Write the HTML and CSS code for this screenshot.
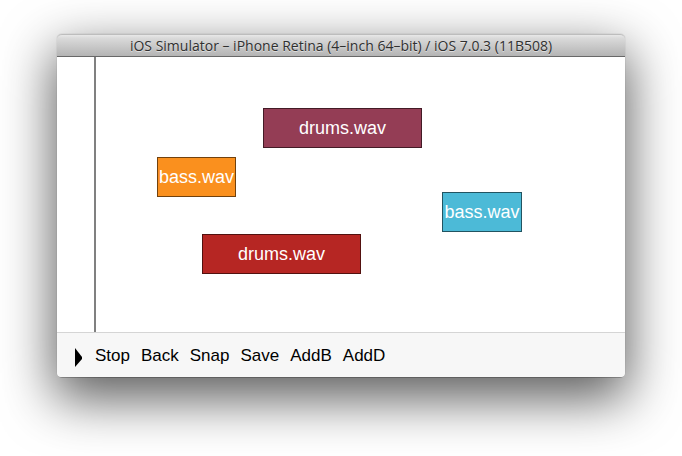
FILE: index.html
```html
<!DOCTYPE html>
<html lang="en">
<head>
<meta charset="utf-8">
<meta name="viewport" content="width=device-width, initial-scale=1">
<title>iOS Simulator</title>
<link rel="stylesheet" href="styles.css">
</head>
<body>
<main class="window">
  <header class="titlebar"><h1 class="title">iOS Simulator – iPhone Retina (4–inch 64–bit) / iOS 7.0.3 (11B508)</h1></header>
  <section class="stage">
    <div class="playhead"></div>
    <div class="clip drums plum">drums.wav</div>
    <div class="clip bass orange">bass.wav</div>
    <div class="clip bass cyan">bass.wav</div>
    <div class="clip drums red">drums.wav</div>
  </section>
  <nav class="toolbar">
    <button class="tool play" type="button" aria-label="Play"><svg class="play-icon" viewBox="0 0 10 20" aria-hidden="true"><path d="M1 0L8 9V11L1 19Z"/></svg></button>
    <button class="tool" type="button">Stop</button>
    <button class="tool" type="button">Back</button>
    <button class="tool" type="button">Snap</button>
    <button class="tool" type="button">Save</button>
    <button class="tool" type="button">AddB</button>
    <button class="tool" type="button">AddD</button>
  </nav>
</main>
</body>
</html>
```
FILE: styles.css
```css
* { box-sizing: border-box; }
body {
  margin: 0;
  padding: 34px 57px 79px;
  min-height: 100vh;
  display: flex;
  background: #fff;
  font-family: "Liberation Sans", Arial, sans-serif;
}
.window {
  flex: 1;
  min-width: 0;
  display: flex;
  flex-direction: column;
  border-radius: 5px;
  background: #fff;
  box-shadow: 0 0 1px 0 rgba(0, 0, 0, .4), 0 1px 0 rgba(0, 0, 0, .2), 0 19px 52px 3px rgba(0, 0, 0, .64);
}
.titlebar {
  height: 23px;
  display: flex;
  align-items: center;
  justify-content: center;
  border-top: 1px solid #bdbdbd;
  border-bottom: 1px solid #686868;
  border-radius: 5px 5px 0 0;
  background: linear-gradient(#e8e8e8, #dadada 15%, #b4b4b4);
}
.title {
  margin: 0;
  font: 14px/20px "Open Sans", "Noto Sans", sans-serif;
  color: #303030;
  text-shadow: 0 1px 0 rgba(255, 255, 255, .5);
  white-space: nowrap;
}
.stage {
  flex: 1;
  position: relative;
  overflow: hidden;
}
.playhead {
  position: absolute;
  top: 0;
  bottom: 0;
  left: 37px;
  width: 2px;
  background: #808080;
}
.clip {
  position: absolute;
  height: 40px;
  border: 1px solid rgba(0, 0, 0, .55);
  color: #fff;
  font-size: 18px;
  line-height: 38px;
  text-align: center;
}
.drums { width: 159px; }
.bass { width: 79px; }
.plum { left: 206px; top: 51px; background: #943d55; }
.orange { left: 100px; top: 100px; background: #fa901e; }
.cyan { left: 385px; top: 135px; width: 80px; background: #4cbad7; }
.red { left: 145px; top: 177px; background: #b62623; }
.toolbar {
  height: 45px;
  display: flex;
  align-items: center;
  gap: 11px;
  padding: 2px 17px 0;
  border-top: 1px solid #d5d5d5;
  border-radius: 0 0 4px 4px;
  background: #f7f7f7;
}
.tool {
  padding: 0;
  border: 0;
  background: none;
  color: #000;
  font: 17px/20px "Liberation Sans", Arial, sans-serif;
}
.play { padding-top: 4px; }
.play-icon { display: block; width: 10px; height: 20px; }
```
